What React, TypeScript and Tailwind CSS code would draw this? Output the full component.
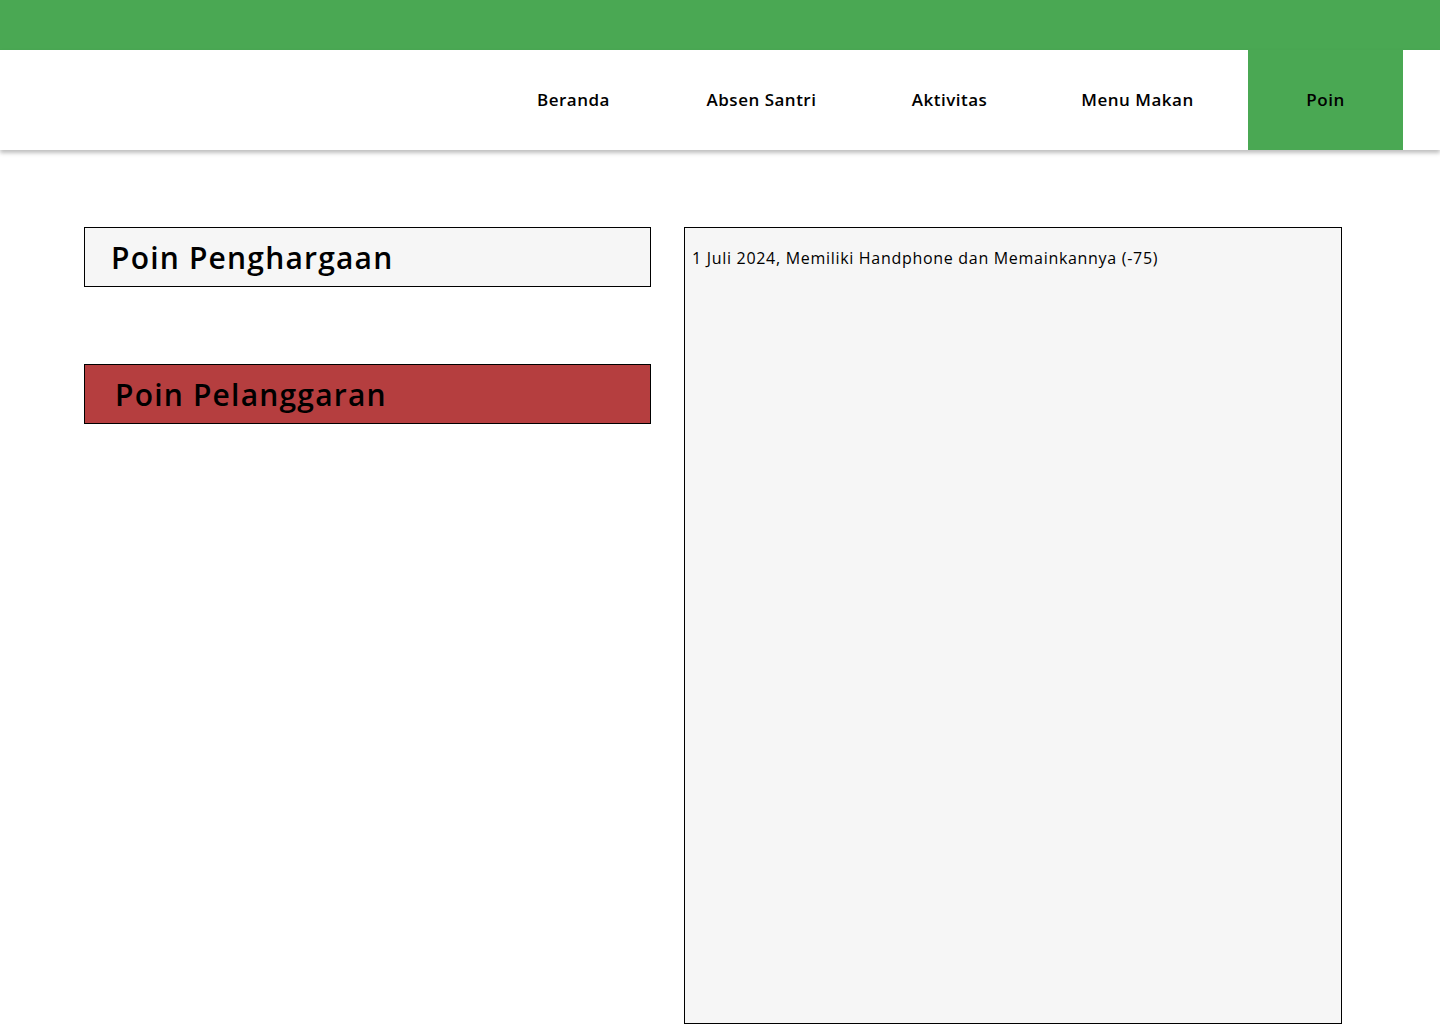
const navItems = ['Beranda', 'Absen Santri', 'Aktivitas', 'Menu Makan', 'Poin'];

export default function App() {
  return (
    <div
      className="min-h-screen bg-white text-black"
      style={{ fontFamily: '"Open Sans", "Noto Sans", sans-serif' }}
    >
      <div className="h-[50px] bg-[#4aa853]" />
      <header className="relative z-10 flex h-[100px] justify-end gap-[33px] bg-white pr-[37px] shadow-[0_3px_4px_rgba(0,0,0,0.25)]">
        {navItems.map((item) => (
          <a
            key={item}
            href="#"
            className={`flex w-[155px] items-center justify-center text-[17px] font-semibold tracking-[0.5px] ${
              item === 'Poin' ? 'bg-[#4aa853]' : ''
            }`}
          >
            {item}
          </a>
        ))}
      </header>
      <main className="flex gap-[33px] pl-[84px] pt-[77px]">
        <div className="flex w-[567px] flex-col gap-[77px]">
          <div className="flex h-[60px] items-center border border-black bg-[#f6f6f6] pl-[26px]">
            <h2 className="text-[30px] font-semibold tracking-[1.2px]">Poin Penghargaan</h2>
          </div>
          <div className="flex h-[60px] items-center border border-black bg-[#b53e3f] pl-[30px]">
            <h2 className="text-[30px] font-semibold tracking-[1.2px]">Poin Pelanggaran</h2>
          </div>
        </div>
        <div className="h-[797px] w-[658px] border border-black bg-[#f6f6f6] px-[7px] pt-[18px]">
          <p className="text-[16px] font-medium tracking-[0.7px]">
            1 Juli 2024, Memiliki Handphone dan Memainkannya (-75)
          </p>
        </div>
      </main>
    </div>
  );
}
